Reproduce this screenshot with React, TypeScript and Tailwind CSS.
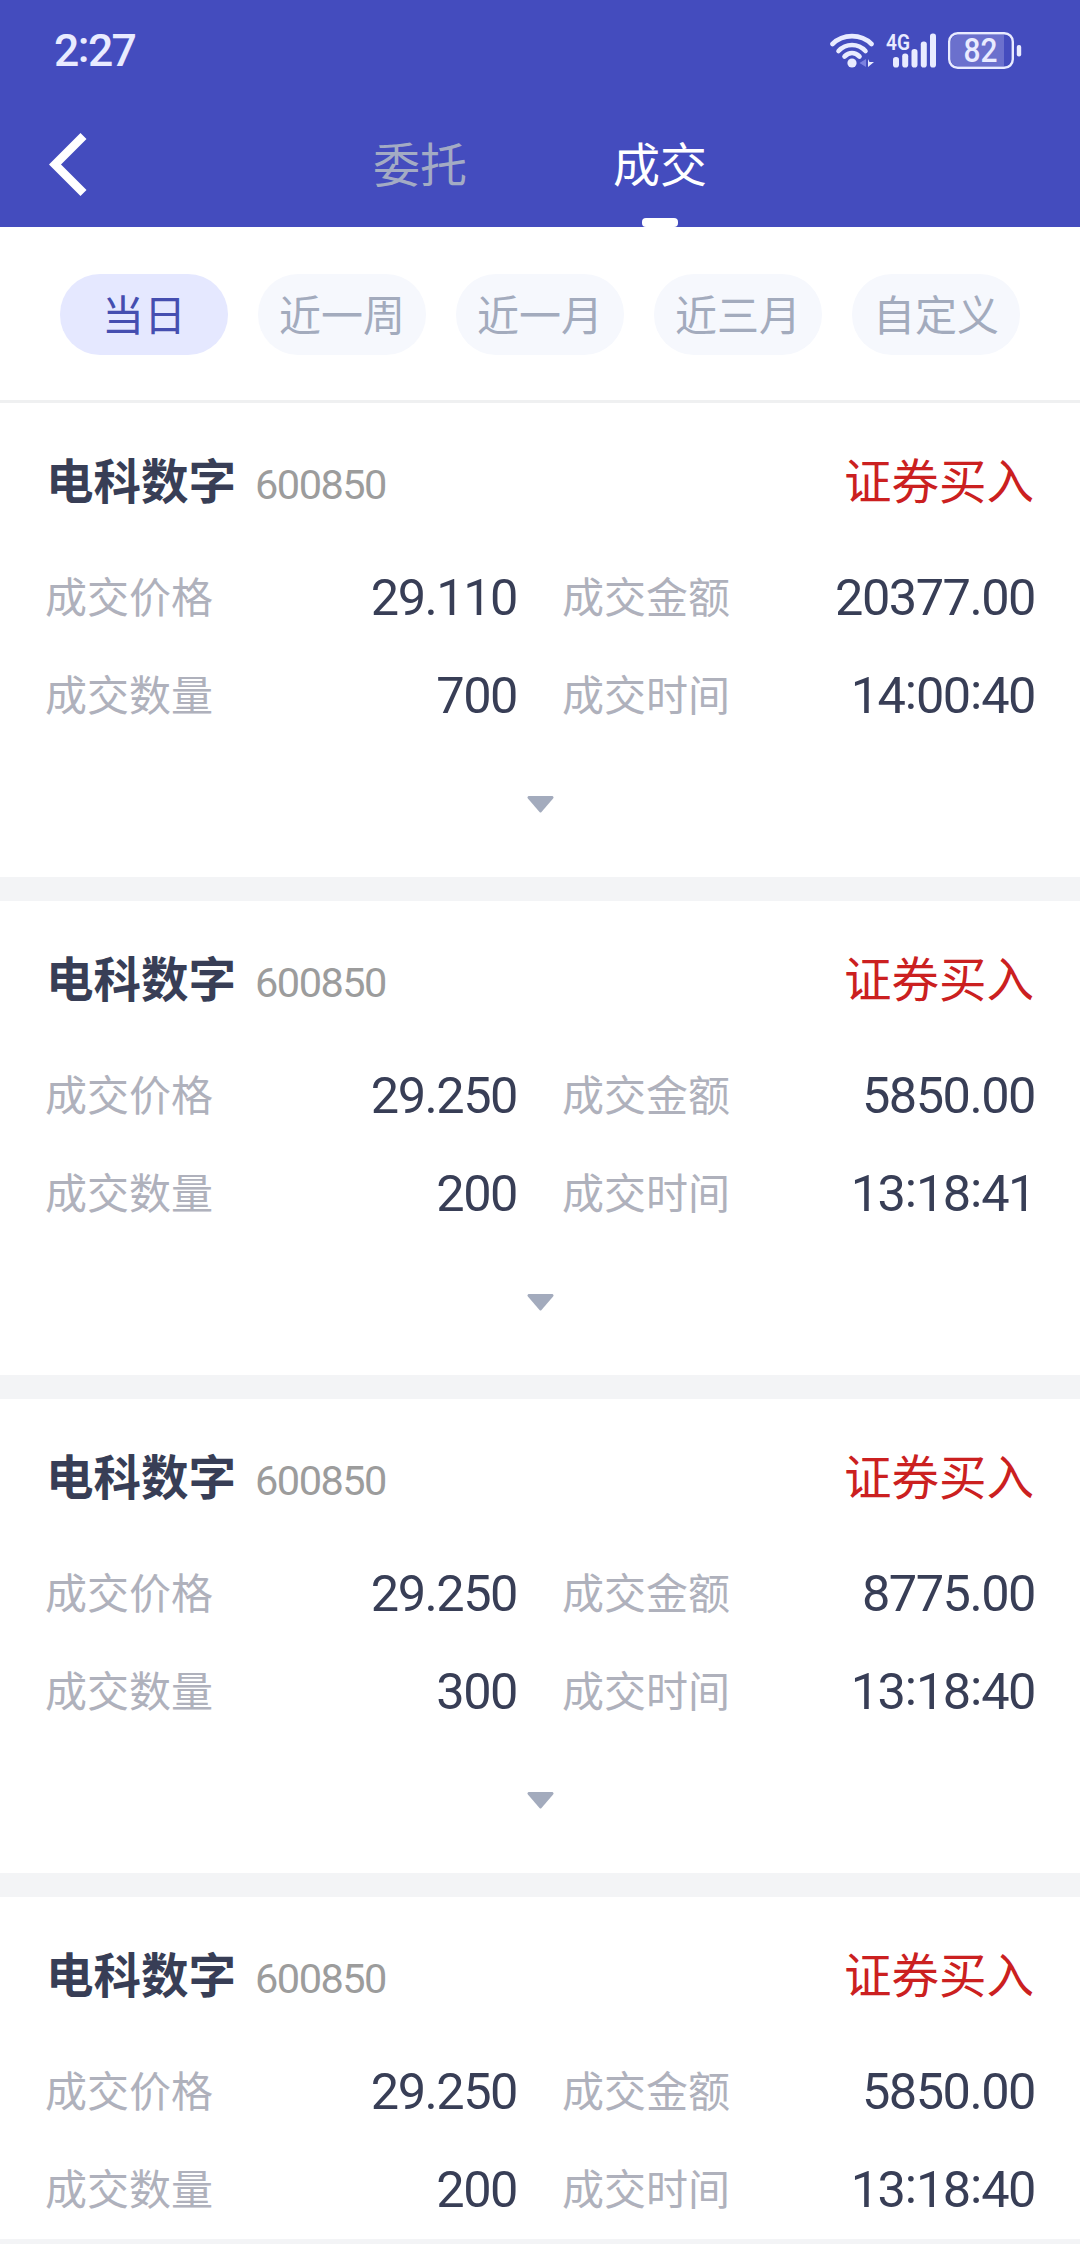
import { Fragment } from "react";

const trades = [
  { price: "29.110", amount: "20377.00", qty: "700", time: "14:00:40" },
  { price: "29.250", amount: "5850.00", qty: "200", time: "13:18:41" },
  { price: "29.250", amount: "8775.00", qty: "300", time: "13:18:40" },
  { price: "29.250", amount: "5850.00", qty: "200", time: "13:18:40" },
];

const ranges = ["当日", "近一周", "近一月", "近三月", "自定义"];

// Digits with the colons lifted to the middle of the figure height.
function Figures({ value }: { value: string }) {
  return (
    <>
      {value.split(":").map((part, i) => (
        <Fragment key={i}>
          {i > 0 && <span className="mx-[0.4px] inline-block -translate-y-[4px]">:</span>}
          {part}
        </Fragment>
      ))}
    </>
  );
}

function StatusBar() {
  return (
    <div className="flex h-[102px] items-center justify-between pr-[58px] pl-[54px] text-[#e9ebff]">
      <span className="font-['Roboto'] text-[44.5px] leading-none font-medium tracking-[-1.9px]">
        <Figures value="2:27" />
      </span>
      <svg width="192" height="60" viewBox="830 21 192 60" fill="none">
        <g stroke="#e9ebff" strokeWidth="4.6" strokeLinecap="round">
          <path d="M832.5 44 C843 33.5 861 33.5 871.500 44" />
          <path d="M838.500 51 C846 43 858 43 865.500 51" />
          <path d="M844.500 56.500 C849 52 855 52 859.500 56.500" />
        </g>
        <circle cx="852" cy="63" r="4.600" fill="#e9ebff" />
        <path d="M866 59v8l-6.500-4z" fill="#7d82e0" />
        <path d="M868 59v8l6-5h-4.500z" fill="#e9ebff" />
        <text x="886" y="50" fontFamily="Roboto" fontWeight="600" fontSize="22.500" textLength="24" lengthAdjust="spacingAndGlyphs" fill="#e9ebff">4G</text>
        <g fill="#e9ebff">
          <rect x="893" y="57" width="6" height="10.500" rx="2.800" />
          <rect x="902.200" y="53.500" width="6" height="14" rx="2.800" />
          <rect x="911.500" y="49" width="6" height="18.500" rx="2.800" />
          <rect x="920.800" y="41.500" width="6" height="26" rx="2.800" />
          <rect x="930" y="33.500" width="6" height="34" rx="2.800" />
          <rect x="1016.800" y="45" width="4.400" height="11.500" rx="2" />
        </g>
        <path d="M957 35h47v31h-47a6 6 0 0 1-6-6V41a6 6 0 0 1 6-6z" fill="#6b70cd" />
        <rect x="949.200" y="33.200" width="63.600" height="34.600" rx="8.500" stroke="#e9ebff" strokeWidth="2.400" />
        <text x="963.500" y="62" fontFamily="Roboto" fontWeight="500" fontSize="32.500" textLength="34" lengthAdjust="spacingAndGlyphs" fill="#e9ebff">82</text>
      </svg>
    </div>
  );
}

function NavBar() {
  return (
    <div className="grid h-[125px] grid-cols-[300px_240px_240px_300px] text-center text-[47px]">
      <div className="flex pt-[31px] pl-[49px]">
        <svg width="38" height="63" viewBox="0 0 38 63" fill="none">
          <path d="M34.500 3 L6 31.500 L34.500 60" stroke="#fff" strokeWidth="8.500" />
        </svg>
      </div>
      <span className="pt-[25px] leading-[70px] text-[#a3abc4]">委托</span>
      <div className="flex flex-col items-center justify-between pt-[25px] text-white">
        <span className="leading-[70px]">成交</span>
        <span className="h-[9px] w-9 rounded-[4px] bg-white" />
      </div>
      <span />
    </div>
  );
}

function Field({ label, value }: { label: string; value: string }) {
  return (
    <div className="flex h-[98px] items-center justify-between">
      <span className="pb-[4px] text-[42px] leading-[60px] text-[#afb1bc]">{label}</span>
      <span className="-mr-px pt-[1px] font-['Roboto'] text-[50.5px] leading-[60px] tracking-[-1.5px] text-[#383e56]">
        <Figures value={value} />
      </span>
    </div>
  );
}

export default function App() {
  return (
    <div className="h-[2244px] w-[1080px] overflow-hidden bg-white font-['Noto_Sans_CJK_SC',sans-serif]">
      <header className="h-[227px] bg-[#444cbe]">
        <StatusBar />
        <NavBar />
      </header>
      <div className="flex h-[176px] justify-between border-b-[3px] border-[#eff0f1] px-[60px] pt-[47px]">
        {ranges.map((r, i) => (
          <button
            key={r}
            className={`h-[81px] w-[168px] rounded-[40px] pb-[3px] text-[42px] leading-[78px] ${
              i === 0 ? "bg-[#e5e8ff] text-[#454eb0]" : "bg-[#f6f8fd] text-[#a3abbd]"
            }`}
          >
            {r}
          </button>
        ))}
      </div>
      {trades.map((t, i) => (
        <section
          key={i}
          className="h-[498px] overflow-hidden border-b-[24px] border-[#f3f4f6] pr-[46px] pl-[45px] last:h-[347px] last:border-b-[5px]"
        >
          <div className="flex h-[145px] items-start justify-between pt-[41px]">
            <div className="flex items-baseline">
              <h2 className="ml-[1px] text-[47.5px] leading-[70px] font-bold text-[#383e56]">电科数字</h2>
              <span className="ml-[19px] font-['Roboto'] text-[41.5px] tracking-[-1.5px] text-[#9c9c9c]">600850</span>
            </div>
            <span className="text-[47.5px] leading-[70px] text-[#cb2020]">证券买入</span>
          </div>
          <div className="grid grid-cols-[471px_472px] gap-x-[46px]">
            <Field label="成交价格" value={t.price} />
            <Field label="成交金额" value={t.amount} />
            <Field label="成交数量" value={t.qty} />
            <Field label="成交时间" value={t.time} />
          </div>
          {i < trades.length - 1 && (
            <div className="flex justify-center pt-[52px] pl-px">
              <svg width="27" height="17" viewBox="0 0 27 17">
                <path d="M1.500 0h24q1.800 1 .6 2.600L14.500 16q-1 1-2 0L.9 2.600Q-.3 1 1.500 0z" fill="#a3abbd" />
              </svg>
            </div>
          )}
        </section>
      ))}
    </div>
  );
}
